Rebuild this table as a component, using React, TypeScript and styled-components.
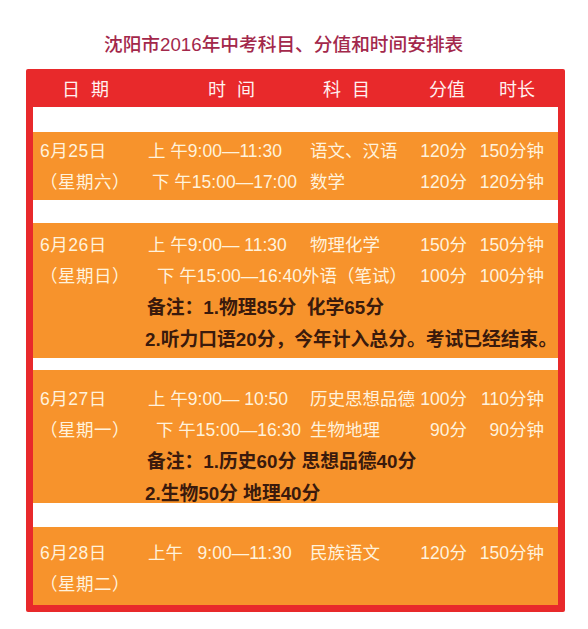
import styled, { createGlobalStyle } from "styled-components";

const GlobalStyle = createGlobalStyle`
    html, body {
        margin: 0;
        padding: 0;
        background: #ffffff;
    }
    body {
        font-family: "Liberation Sans", "Noto Sans CJK SC", sans-serif;
    }
`;

type Slot = { text: string; indent?: number; span?: number };

type Row = {
    date?: string;
    time?: Slot;
    subject?: string;
    score?: string;
    duration?: string;
};

type Block = {
    rows: Row[];
    notes?: string[];
    height: number;
    padTop: number;
    gapBefore: number;
};

const blocks: Block[] = [
    {
        gapBefore: 25,
        height: 68,
        padTop: 2,
        rows: [
            { date: "6月25日", time: { text: "上 午9:00—11:30" }, subject: "语文、汉语", score: "120分", duration: "150分钟" },
            { date: "（星期六）", time: { text: "下 午15:00—17:00", indent: 4 }, subject: "数学", score: "120分", duration: "120分钟" },
        ],
    },
    {
        gapBefore: 23,
        height: 135,
        padTop: 5,
        rows: [
            { date: "6月26日", time: { text: "上 午9:00— 11:30" }, subject: "物理化学", score: "150分", duration: "150分钟" },
            { date: "（星期日）", time: { text: "下 午15:00—16:40外语（笔试）", indent: 9, span: 2 }, score: "100分", duration: "100分钟" },
        ],
        notes: ["备注：1.物理85分  化学65分", "2.听力口语20分，今年计入总分。考试已经结束。"],
    },
    {
        gapBefore: 12,
        height: 133,
        padTop: 12,
        rows: [
            { date: "6月27日", time: { text: "上 午9:00— 10:50" }, subject: "历史思想品德", score: "100分", duration: "110分钟" },
            { date: "（星期一）", time: { text: "下 午15:00—16:30", indent: 8 }, subject: "生物地理", score: "90分", duration: "90分钟" },
        ],
        notes: ["备注：1.历史60分 思想品德40分", "2.生物50分 地理40分"],
    },
    {
        gapBefore: 24,
        height: 78,
        padTop: 9,
        rows: [
            { date: "6月28日", time: { text: "上午   9:00—11:30" }, subject: "民族语文", score: "120分", duration: "150分钟" },
            { date: "（星期二）" },
        ],
    },
];

const Page = styled.div`
    width: 588px;
    height: 629px;
    overflow: hidden;
`;

const Title = styled.h1`
    margin: 0;
    padding: 33px 0 0 104px;
    height: 36px;
    font-size: 18.7px;
    line-height: 24px;
    font-weight: 500;
    color: #a3284b;
    white-space: nowrap;
`;

const Frame = styled.div`
    margin-left: 26px;
    width: 539px;
    background: #e8292b;
    padding: 0 7px 7px;
    box-sizing: border-box;
    border-radius: 2px;
`;

const Header = styled.div`
    height: 38px;
    display: grid;
    grid-template-columns: 146px 115px 106px 70px auto;
    align-items: center;
    padding-left: 29px;
    color: #fff1f0;
    font-size: 18px;
    white-space: nowrap;
`;

const HeadCell = styled.span<{ spread?: boolean }>`
    word-spacing: ${({ spread }) => (spread ? "6px" : "0")};
`;

const Body = styled.div`
    background: #ffffff;
    display: flex;
    flex-direction: column;
`;

const Band = styled.section<{ gapBefore: number; h: number; padTop: number }>`
    margin-top: ${({ gapBefore }) => gapBefore}px;
    height: ${({ h }) => h}px;
    padding-top: ${({ padTop }) => padTop}px;
    box-sizing: border-box;
    background: #f7932c;
`;

const DataRow = styled.div`
    display: grid;
    grid-template-columns: 108px 162px 90px 67px 77px;
    padding: 0 14px 0 7px;
    height: 31px;
    align-items: center;
    color: #fff2dc;
    font-size: 17.5px;
    white-space: nowrap;
`;

const DateCell = styled.span`
    letter-spacing: 0.5px;
`;

const TimeCell = styled.span<{ indent: number; span: number }>`
    padding-left: ${({ indent }) => indent}px;
    grid-column: span ${({ span }) => span};
    white-space: pre;
`;

const RightCell = styled.span`
    text-align: right;
`;

const NoteRow = styled.div<{ indent: number }>`
    height: 31.5px;
    display: flex;
    align-items: center;
    padding-left: ${({ indent }) => indent}px;
    color: #3a1a0c;
    font-size: 18.8px;
    font-weight: 700;
    white-space: pre;
`;

export default function App() {
    return (
        <Page>
            <GlobalStyle />
            <Title>沈阳市2016年中考科目、分值和时间安排表</Title>
            <Frame>
                <Header>
                    <HeadCell spread>日 期</HeadCell>
                    <HeadCell spread>时 间</HeadCell>
                    <HeadCell spread>科 目</HeadCell>
                    <HeadCell>分值</HeadCell>
                    <HeadCell>时长</HeadCell>
                </Header>
                <Body>
                    {blocks.map((block, i) => (
                        <Band key={i} gapBefore={block.gapBefore} h={block.height} padTop={block.padTop}>
                            {block.rows.map((row, j) => (
                                <DataRow key={j}>
                                    <DateCell>{row.date}</DateCell>
                                    {row.time && (
                                        <TimeCell indent={row.time.indent ?? 0} span={row.time.span ?? 1}>
                                            {row.time.text}
                                        </TimeCell>
                                    )}
                                    {row.subject && <span>{row.subject}</span>}
                                    {row.score && <RightCell>{row.score}</RightCell>}
                                    {row.duration && <RightCell>{row.duration}</RightCell>}
                                </DataRow>
                            ))}
                            {block.notes?.map((note, k) => (
                                <NoteRow key={k} indent={k === 0 ? 114 : 112}>
                                    {note}
                                </NoteRow>
                            ))}
                        </Band>
                    ))}
                </Body>
            </Frame>
        </Page>
    );
}
